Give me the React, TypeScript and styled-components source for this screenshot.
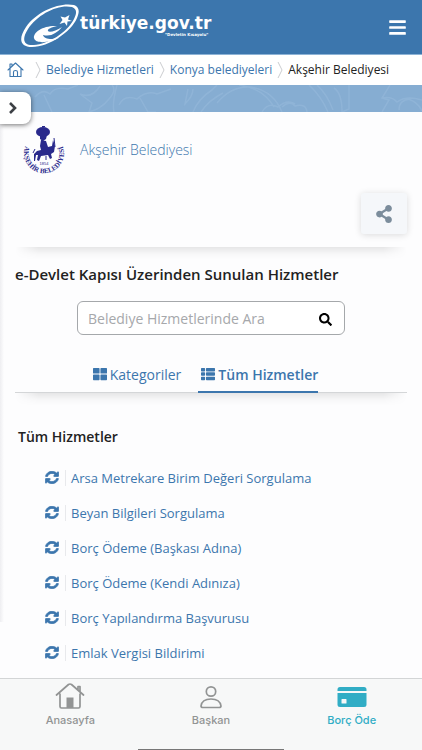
import React from 'react';
import styled, { createGlobalStyle, css } from 'styled-components';
import { FaBars, FaSearch, FaShareAlt, FaThLarge, FaThList } from 'react-icons/fa';

const blue = '#3c76ad';

const GlobalStyle = createGlobalStyle`
  * { box-sizing: border-box; }
  body { margin: 0; background: #fdfdfe; font-family: 'Open Sans', 'Noto Sans', sans-serif; color: #222; }
  a { color: ${blue}; text-decoration: none; }
  button { font: inherit; cursor: pointer; }
  h1, h2, h3, ul, ol { margin: 0; padding: 0; }
  ul, ol { list-style: none; }
  svg { display: block; flex: none; }
`;

const Page = styled.div`
  display: flex;
  flex-direction: column;
  min-height: 100vh;
`;

const Header = styled.header`
  display: flex;
  align-items: center;
  justify-content: space-between;
  height: 55px;
  padding: 0 15px 0 20px;
  background: ${blue};
  border-bottom: 1px solid #8db3d6;
`;

const Brand = styled.a`
  display: block;
`;

const MenuButton = styled.button`
  display: flex;
  padding: 0;
  border: 0;
  background: none;
  color: #fff;
`;

const Breadcrumb = styled.ol`
  display: flex;
  align-items: center;
  height: 30px;
  padding-left: 7px;
  background: #fff;
  font-size: 12px;
  line-height: 28px;
  white-space: nowrap;
`;

const Crumb = styled.li`
  display: flex;
  align-items: center;
  & + & > svg { margin: 0 5px; }
  &:first-child { margin-right: 6px; }
`;

const Banner = styled.div`
  position: relative;
  height: 27px;
  background: #86add2;
  & > svg { width: 100%; height: 27px; }
`;

const DrawerButton = styled.button`
  position: absolute;
  z-index: 2;
  top: 7px;
  left: 0;
  display: flex;
  align-items: center;
  width: 31px;
  height: 32px;
  padding: 0 0 0 8px;
  border: 0;
  border-radius: 0 8px 8px 0;
  background: #fff;
  box-shadow: 0 1px 5px rgba(0, 0, 0, 0.55);
`;

const Main = styled.main`
  flex: 1;
  position: relative;
  padding: 0 15px 6px;
`;

const DrawerEdge = styled.div`
  position: absolute;
  top: 0;
  bottom: 56px;
  left: 0;
  width: 4px;
  background: linear-gradient(90deg, #eeeef1, #fdfdfe);
`;

const FadeRule = styled.div<{ $line?: boolean }>`
  height: 14px;
  ${(p) => p.$line && css`border-top: 1px solid #d4d6d8;`}
  &::before {
    content: '';
    display: block;
    height: 12px;
    background: linear-gradient(rgba(0, 0, 0, 0.09), rgba(0, 0, 0, 0.02) 60%, transparent);
    mask-image: linear-gradient(90deg, transparent, #000 6%, #000 94%, transparent);
  }
`;

const Institution = styled.section`
  display: flex;
  align-items: center;
  gap: 15px;
  height: 76px;
  padding-left: 8px;
`;

const InstitutionName = styled.h1`
  font-size: 14px;
  font-weight: 300;
  line-height: 20px;
`;

const Actions = styled.div`
  display: flex;
  justify-content: flex-end;
  padding: 5px 0 13px;
`;

const ShareButton = styled.button`
  display: flex;
  align-items: center;
  justify-content: center;
  width: 46px;
  height: 41px;
  padding: 0;
  border: 0;
  border-radius: 3px;
  background: #f5f7fa;
  color: #7c8d9c;
  box-shadow: 0 1px 7px rgba(0, 0, 0, 0.14);
`;

const Heading = styled.h2`
  padding-top: 2px;
  font-size: 15px;
  font-weight: 600;
  line-height: 22px;
`;

const SearchForm = styled.form`
  display: flex;
  align-items: center;
  width: 268px;
  max-width: 100%;
  height: 34px;
  margin: 16px auto 0;
  padding: 0 12px 0 10px;
  border: 1px solid #a5a8ab;
  border-radius: 6px;
  background: #fff;
`;

const SearchInput = styled.input`
  flex: 1;
  min-width: 0;
  padding: 0;
  border: 0;
  outline: 0;
  background: none;
  font: 14px 'Open Sans', sans-serif;
  &::placeholder { color: #a6a8ab; opacity: 1; }
`;

const SearchButton = styled.button`
  display: flex;
  padding: 2px 0 0;
  border: 0;
  background: none;
  color: #000;
`;

const Tabs = styled.div`
  display: flex;
  justify-content: center;
  gap: 17px;
  margin: 22px 0 -1px;
  padding-right: 14px;
`;

const Tab = styled.button<{ $active?: boolean }>`
  position: relative;
  z-index: 1;
  display: flex;
  align-items: center;
  gap: 3px;
  height: 36px;
  padding: 0 0 0 3px;
  border: 0;
  border-bottom: 2px solid ${(p) => (p.$active ? blue : 'transparent')};
  background: none;
  color: ${blue};
  font-size: 14px;
  font-weight: ${(p) => (p.$active ? 600 : 400)};
`;

const ListTitle = styled.h3`
  padding: 21px 3px 13px;
  font-size: 14px;
  font-weight: 600;
  line-height: 20px;
`;

const ServiceItem = styled.li`
  display: flex;
  align-items: center;
  height: 35px;
  padding-left: 30px;
`;

const ServiceLink = styled.a`
  margin-left: 6px;
  padding-left: 5px;
  border-left: 1px solid #e8e9ec;
  font-size: 13px;
  line-height: 16px;
`;

const BottomBar = styled.nav`
  position: sticky;
  z-index: 3;
  bottom: 0;
  flex: none;
  height: 72px;
  border-top: 1px solid #d3d5d6;
  background: #f7f8f8;
  display: flex;
  flex-direction: column;
  justify-content: space-between;
`;

const BarItems = styled.div`
  display: grid;
  grid-template-columns: repeat(3, 1fr);
`;

const BarLink = styled.a<{ $active?: boolean }>`
  display: flex;
  flex-direction: column;
  align-items: center;
  gap: 2px;
  padding-top: 4px;
  color: ${(p) => (p.$active ? '#31adc5' : '#929494')};
  font: 500 11px/16px Inter, sans-serif;
`;

const HomeIndicator = styled.div`
  width: 146px;
  height: 1px;
  margin: 0 auto;
  background: #777;
`;

const Logo = () => (
  <svg width="194" height="48" viewBox="0 0 194 48" role="img" aria-label="türkiye.gov.tr">
    <path fillRule="evenodd" fill="#fff" d="M54 2C40-1 17 8 6 24-2 36 0 44 12 44 29 44 51 29 57 15c3-7 2-11-3-13ZM52 4c5 2 5 6 2 12-7 14-26 25-40 26C4 43 1 37 8 26 18 11 38 1 52 4Z" />
    <path fill="#fff" d="M37 23C24 22 13 29 14 35c1 6 15 5 25 0-8 2-15 1-16-3 8 2 14-2 19-8-6 4-13 6-14 4-1-2 4-4 9-5Z" />
    <path fill="#fff" d="m49.500 12-1.500 4.500 4 1.500-4.500.5-.5 4.500-2.500-3.500-5 1.500 3-4-2-3.500 4.500 1Z" />
    <text x="60" y="26" fill="#fff" fontFamily="DejaVu Sans" fontWeight="700" fontSize="17">türkiye.gov.tr</text>
    <text x="145" y="33" fill="#fff" fontFamily="DejaVu Sans" fontWeight="700" fontSize="4">"Devletin Kısayolu"</text>
  </svg>
);

const HomeIcon = () => (
  <svg width="17" height="16" viewBox="0 0 17 16" fill="none" stroke={blue} strokeWidth="1.100" strokeLinejoin="round" strokeLinecap="round">
    <path d="M1 8 8.500 1 16 8M3 6.500V14.500H14V6.500M6.500 14V10Q6.500 8.500 8.500 8.500T10.500 10V14M3 5V2H5V3.500" />
  </svg>
);

const Separator = () => (
  <svg width="6" height="18" viewBox="0 0 6 18" fill="none" stroke="#cbcdd0">
    <path d="m1 1 4 8-4 8" />
  </svg>
);

const BannerPattern = () => (
  <svg viewBox="0 0 422 27" preserveAspectRatio="xMidYMid slice" fill="none" stroke="#9bbddd" strokeOpacity=".45" strokeWidth="1.500">
    <path d="M35 12q8-9 15-3 5-8 18-5l10-4M44 10l8 17M80 9l12 9-3 9q12-3 20-13 8-9 3-14M80 9q12 5 20-8M117 0q-5 18-3 27M119 20q5-11 18-6 10-9 20-5l14-5M140 13l8 14h8M188 4l-3 15q8-8 8-15M193 27q5-13 19-22l5-5M201 27q8-12 22-19M217 18q14-17 33-16 23 3 32 25M239 0q24 3 35 22M262 27q6-10 16-5 9-8 17-3M282 22q8-7 13-1 11-3 12 6M309 0q12 11 19 27M317 0q10 9 16 25M334 3q8 5 8 24l7-3V0M390 0l-8 13 7 2-7 12M382 13q10-2 15 4 9-7 25-2M399 25q0-10 11-11M408 14q10 3 14 12" />
  </svg>
);

const Emblem = () => (
  <svg width="42" height="50" viewBox="0 0 42 50" fill="#29298c" role="img" aria-label="Akşehir Belediyesi">
    <defs><path id="ring" d="M3 19.500A20 20 0 1 0 39 19.500" /></defs>
    <ellipse cx="20" cy="7" rx="7" ry="5" />
    <path d="M19 2h3v-1h-3ZM17 10h7l-1 4-3 2-3-2ZM18 15l5 1 2 6 4-1 1-6 2 6-1 6-3 2 1 4-2 1-2-4-7 1-2 5-2-1 1-5-2 0-1 6-1 0 0-7 3-3 4-1-1-4Z" />
    <path fill="none" stroke="#29298c" d="m31 13 1 9M12 24l-2 4M23 31v4" />
    <text x="21" y="40" textAnchor="middle" fontSize="4" fontFamily="Liberation Sans">1854</text>
    <text fontSize="7" fontWeight="700" fontFamily="Liberation Serif" textAnchor="middle"><textPath href="#ring" startOffset="50%">AKŞEHİR BELEDİYESİ</textPath></text>
  </svg>
);

const SyncIcon = () => (
  <svg width="14" height="13" viewBox="-40 -40 1616 1616" preserveAspectRatio="none" fill={blue} stroke={blue} strokeWidth="90">
    <path d="M1511 928q0 5-1 7-64 268-268 434.500t-478 166.500q-146 0-282.500-55t-243.500-157l-129 129q-19 19-45 19t-45-19-19-45v-448q0-26 19-45t45-19h448q26 0 45 19t19 45-19 45l-137 137q71 66 161 102t187 36q134 0 250-65t186-179q11-17 53-117 8-23 30-23h192q13 0 22.500 9.500t9.500 22.500zm25-800v448q0 26-19 45t-45 19h-448q-26 0-45-19t-19-45 19-45l138-138q-148-137-349-137-134 0-250 65t-186 179q-11 17-53 117-8 23-30 23h-199q-13 0-22.500-9.500t-9.500-22.500v-7q65-268 270-434.500t480-166.500q146 0 284 55.500t245 156.500l130-129q19-19 45-19t45 19 19 45z" />
  </svg>
);

const BarHome = () => (
  <svg width="30" height="27" viewBox="0 0 30 27" fill="none" stroke="currentColor" strokeWidth="1.700" strokeLinecap="round" strokeLinejoin="round">
    <path d="M1.500 12 13.500 1.500Q15 .5 16.500 1.500L28.500 12M5 11V23.500Q5 25 6.500 25H23.500Q25 25 25 23.500V11M23 6.500V3.500H25V8.500" />
    <path d="M11.500 14.500h7V25h-7Z" fill="currentColor" stroke="none" />
  </svg>
);

const BarPerson = () => (
  <svg width="30" height="27" viewBox="0 0 30 27" fill="none" stroke="currentColor" strokeWidth="1.700">
    <circle cx="15" cy="8.500" r="4.700" />
    <path d="M7 24.500q-2 0-2-1.500 1-7 10-7t10 7q0 1.500-2 1.500Z" />
  </svg>
);

const BarCard = () => (
  <svg width="30" height="27" viewBox="0 0 30 27" fill="currentColor">
    <path fillRule="evenodd" d="M.5 8V6.500Q.5 4 3 4H27Q29.500 4 29.500 6.500V8ZM.5 10H29.500V21.500Q29.500 24 27 24H3Q.5 24 .5 21.500ZM5 16Q4.500 16 4.500 16.500V20Q4.500 20.500 5 20.500H9Q9.500 20.500 9.500 20V16.500Q9.500 16 9 16Z" />
  </svg>
);

const services = [
  'Arsa Metrekare Birim Değeri Sorgulama',
  'Beyan Bilgileri Sorgulama',
  'Borç Ödeme (Başkası Adına)',
  'Borç Ödeme (Kendi Adınıza)',
  'Borç Yapılandırma Başvurusu',
  'Emlak Vergisi Bildirimi',
];

export default function App() {
  return (
    <Page>
      <GlobalStyle />
      <Header>
        <Brand href="#"><Logo /></Brand>
        <MenuButton aria-label="Menü"><FaBars size={19} /></MenuButton>
      </Header>
      <Breadcrumb>
        <Crumb><a href="#" aria-label="Ana sayfa"><HomeIcon /></a></Crumb>
        <Crumb><Separator /><a href="#">Belediye Hizmetleri</a></Crumb>
        <Crumb><Separator /><a href="#">Konya belediyeleri</a></Crumb>
        <Crumb><Separator />Akşehir Belediyesi</Crumb>
      </Breadcrumb>
      <Banner>
        <BannerPattern />
        <DrawerButton aria-label="Yan menüyü aç">
          <svg width="10" height="12" viewBox="0 0 10 12" fill="none" stroke="#3d4045" strokeWidth="2.600"><path d="m2 1 5 5-5 5" /></svg>
        </DrawerButton>
      </Banner>
      <Main>
        <DrawerEdge />
        <Institution>
          <Emblem />
          <InstitutionName><a href="#">Akşehir Belediyesi</a></InstitutionName>
        </Institution>
        <Actions><ShareButton aria-label="Paylaş"><FaShareAlt size={18} /></ShareButton></Actions>
        <FadeRule />
        <Heading>e-Devlet Kapısı Üzerinden Sunulan Hizmetler</Heading>
        <SearchForm role="search" onSubmit={(e) => e.preventDefault()}>
          <SearchInput aria-label="Belediye Hizmetlerinde Ara" placeholder="Belediye Hizmetlerinde Ara" />
          <SearchButton aria-label="Ara"><FaSearch size={13} /></SearchButton>
        </SearchForm>
        <Tabs role="tablist">
          <Tab role="tab" aria-selected={false}><FaThLarge size={14} />Kategoriler</Tab>
          <Tab role="tab" aria-selected $active><FaThList size={14} />Tüm Hizmetler</Tab>
        </Tabs>
        <FadeRule $line />
        <ListTitle>Tüm Hizmetler</ListTitle>
        <ul>
          {services.map((name) => (
            <ServiceItem key={name}><SyncIcon /><ServiceLink href="#">{name}</ServiceLink></ServiceItem>
          ))}
        </ul>
      </Main>
      <BottomBar>
        <BarItems>
          <BarLink href="#"><BarHome />Anasayfa</BarLink>
          <BarLink href="#"><BarPerson />Başkan</BarLink>
          <BarLink href="#" $active><BarCard />Borç Öde</BarLink>
        </BarItems>
        <HomeIndicator />
      </BottomBar>
    </Page>
  );
}
